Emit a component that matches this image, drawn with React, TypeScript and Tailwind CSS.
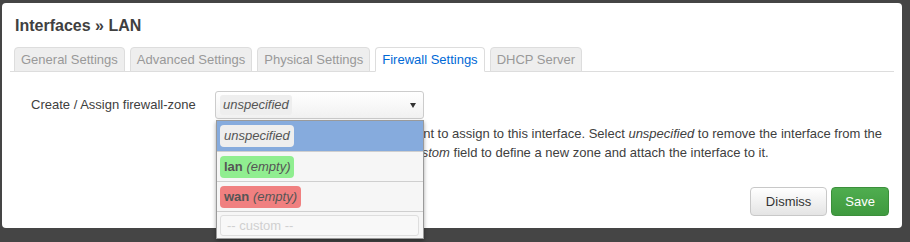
import React from "react";

const tabs = [
  { label: "General Settings", active: false },
  { label: "Advanced Settings", active: false },
  { label: "Physical Settings", active: false },
  { label: "Firewall Settings", active: true },
  { label: "DHCP Server", active: false },
];

function Badge({
  className,
  children,
}: {
  className: string;
  children: React.ReactNode;
}) {
  return (
    <span
      className={`inline-flex h-[22px] items-center rounded-[4px] px-[4px] text-[13px] leading-[18px] text-[#555] ${className}`}
    >
      {children}
    </span>
  );
}

function ZoneDropdown() {
  return (
    <div className="absolute left-[1px] top-[29px] z-10 flex w-[208px] flex-col border border-[#9a9a9a] bg-[#f6f6f6] shadow-[0_2px_4px_rgba(0,0,0,0.35)]">
      <div className="flex h-[30px] items-center bg-[#86abdd] px-[3px]">
        <Badge className="bg-[#eeeeee] italic">unspecified</Badge>
      </div>
      <div className="flex h-[30px] items-center border-t border-[#cfcfcf] px-[3px]">
        <Badge className="bg-[#90ee90]">
          <b>lan</b>&nbsp;<i>(empty)</i>
        </Badge>
      </div>
      <div className="flex h-[30px] items-center border-t border-[#cfcfcf] px-[3px]">
        <Badge className="bg-[#f08080]">
          <b>wan</b>&nbsp;<i>(empty)</i>
        </Badge>
      </div>
      <div className="flex h-[27px] items-start border-t border-[#cfcfcf] px-[3px] pt-[3px]">
        <input
          readOnly
          placeholder="-- custom --"
          className="h-[21px] w-[199px] rounded-[3px] border border-[#dedede] bg-[#f8f8f8] px-[6px] text-[13px] text-[#333] outline-none placeholder:text-[#d0d0d0]"
        />
      </div>
    </div>
  );
}

export default function App() {
  return (
    <div
      className="h-[242px] w-[910px] overflow-hidden bg-[#454545] pl-[2px] pt-[3px]"
      style={{ fontFamily: '"Liberation Sans", Arial, sans-serif' }}
    >
      <div className="flex h-[225px] w-[900px] flex-col rounded-[4px] bg-white">
        <h3 className="ml-[13px] mt-[13px] text-[16px] font-bold leading-[20px] text-[#404040]">
          Interfaces » LAN
        </h3>

        <ul className="mx-[8px] mt-[11px] flex items-end gap-[5px] border-b border-[#dddddd] pl-[4px]">
          {tabs.map((t) => (
            <li
              key={t.label}
              className={
                t.active
                  ? "-mb-px rounded-t-[4px] border border-[#dddddd] border-b-white bg-white px-[6px] pb-[2px] pt-[3px] text-[13px] leading-[18px] text-[#0069d6]"
                  : "-mb-px rounded-t-[4px] border border-[#dddddd] bg-[#eeeeee] px-[6px] pb-[2px] pt-[3px] text-[13px] leading-[18px] text-[#999999]"
              }
            >
              {t.label}
            </li>
          ))}
        </ul>

        <div className="ml-[29px] mt-[19px] flex items-center">
          <label className="w-[184px] text-[13px] leading-[18px] text-[#404040]">
            Create / Assign firewall-zone
          </label>
          <div className="relative">
            <div className="flex h-[28px] w-[209px] items-center justify-between rounded-[3px] border border-[#cccccc] bg-gradient-to-b from-white to-[#f1f1f1] pl-[4px] pr-[7px]">
              <span className="inline-flex h-[20px] items-center rounded-[3px] bg-[#eeeeee] px-[3px] text-[13px] italic text-[#555]">
                unspecified
              </span>
              <svg width="6" height="5" viewBox="0 0 6 5">
                <polygon points="0,0 6,0 3,5" fill="#333" />
              </svg>
            </div>
            <ZoneDropdown />
          </div>
        </div>

        {/* help icon sits under the open dropdown, so only the text shows */}
        <p className="ml-[234px] mr-[6px] mt-[5px] text-[13px] leading-[19px] text-[#404040]">
          Choose the firewall zone you want to assign to this interface. Select{" "}
          <em>unspecified</em> to remove the interface from the associated zone
          or fill out the <em>custom</em> field to define a new zone and attach
          the interface to it.
        </p>

        <div className="mb-[12px] mr-[13px] mt-auto flex justify-end gap-[4px]">
          <button className="h-[29px] rounded-[4px] border border-[#c8c8c8] bg-gradient-to-b from-white to-[#e4e4e4] px-[15px] text-[13px] text-[#333]">
            Dismiss
          </button>
          <button className="h-[29px] rounded-[4px] border border-[#3b8f3b] bg-gradient-to-b from-[#4fad4f] to-[#3f9a3f] px-[13px] text-[13px] text-white">
            Save
          </button>
        </div>
      </div>
    </div>
  );
}
